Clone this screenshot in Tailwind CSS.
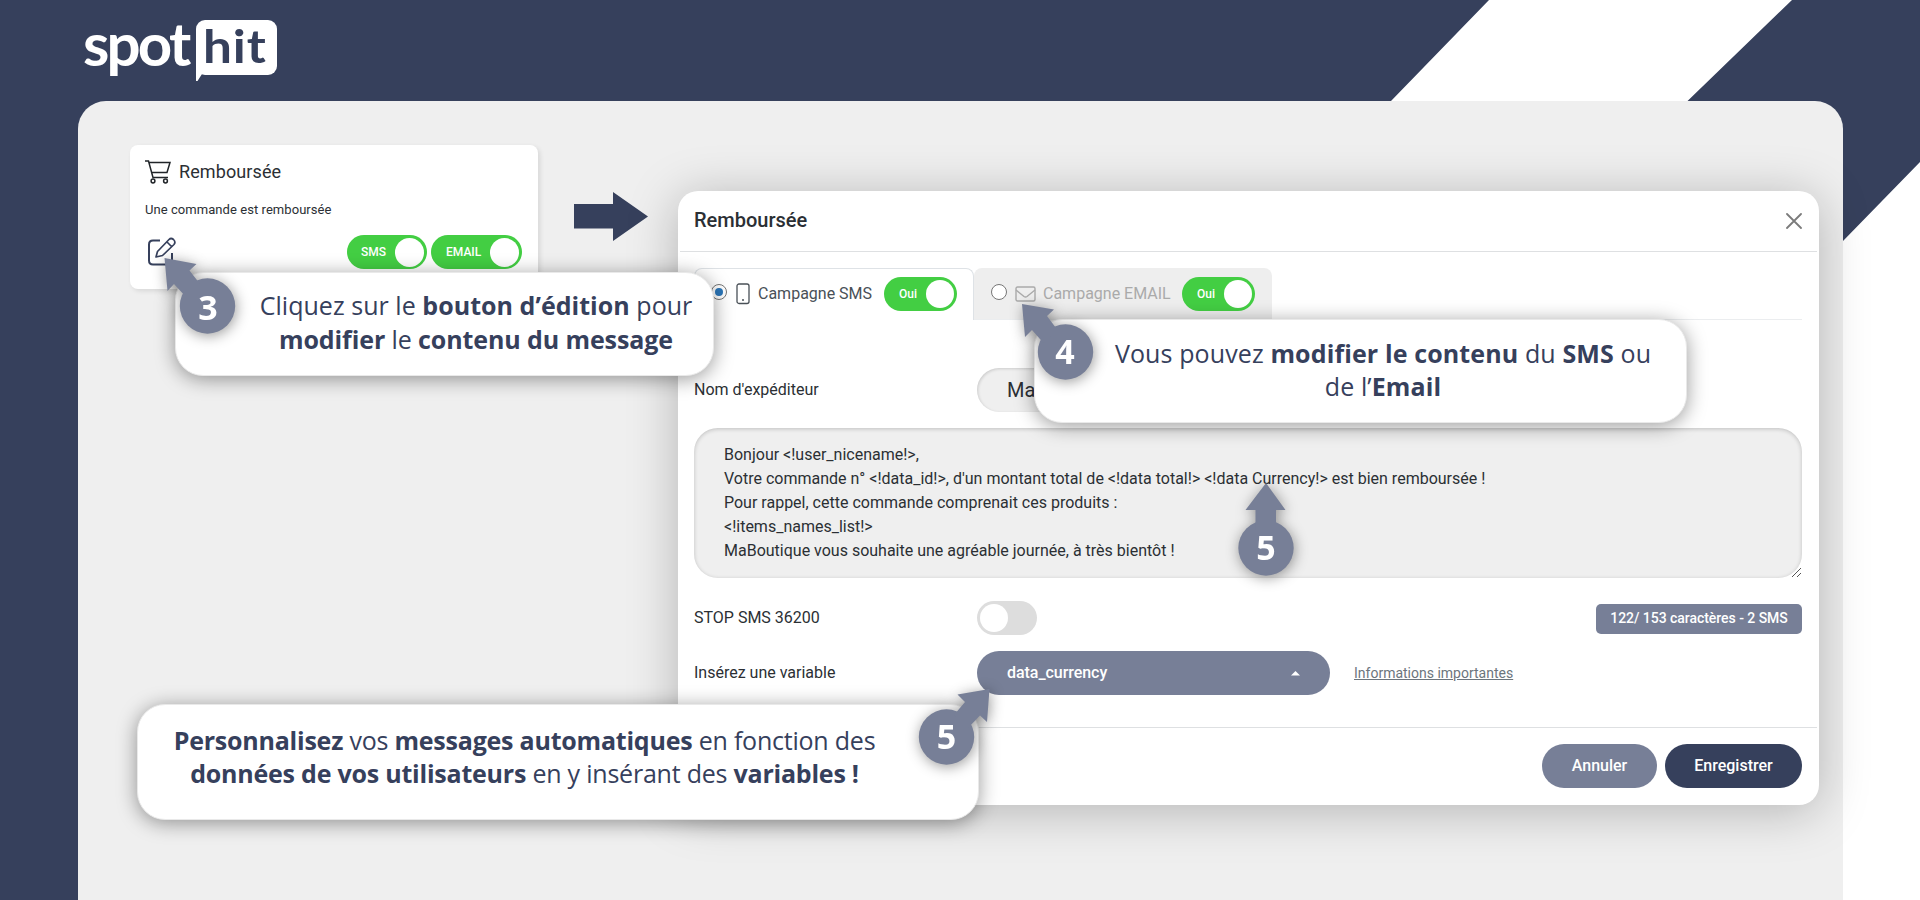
<!DOCTYPE html>
<html lang="fr"><head><meta charset="utf-8"><title>Spot-Hit</title>
<script src="https://cdn.jsdelivr.net/npm/@tailwindcss/browser@4"></script></head>
<body class="relative w-[1920px] h-[900px] overflow-hidden bg-white font-['Roboto',sans-serif] text-[#2b2f34]">
<svg class="absolute inset-0" width="1920" height="900" fill="#36405c"><path d="M0 0H1489L1391 101V200H100V900H0Z"/><path d="M1792 0H1920V162L1843 241L1780 300V101H1687.5Z"/></svg>
<header class="relative h-[101px] pl-[83px] pt-5 flex items-start text-white font-['Lato',sans-serif] font-bold">
  <span class="w-[113px] mt-[-5px] text-[60px] leading-[57px] tracking-[-2.8px]">spot</span>
  <span class="relative w-[81px] h-[55px] rounded-[9px] bg-white text-[#36405c] text-[45px] leading-[53px] pl-[7px]"><span class="inline-block origin-left scale-x-[1.14] tracking-[0.8px]">hit</span>
    <svg class="absolute left-0 top-[45px]" width="10" height="16" fill="#fff"><path d="M0 0H10V9H6L1.5 16H0Z"/></svg></span>
</header>
<main class="relative ml-[78px] w-[1765px] h-[799px] rounded-t-[28px] bg-[#efefef] flex items-start">
  <section class="ml-[52px] mt-[44px] w-[408px] h-[144px] rounded-lg bg-white shadow-[2px_2px_5px_rgba(0,0,0,.1)] pt-[14px] pl-[15px] pr-4 flex flex-col">
    <div class="flex items-center h-6 text-[18px] tracking-[0.1px]">
      <svg class="mr-2 mt-[2px]" width="26" height="24" fill="none" stroke="#212529" stroke-width="1.5"><path d="M0 1H3.5L8 17.5H23M4 2.5H25L22 12.5H6.5"/><circle cx="8" cy="21" r="1.9"/><circle cx="20.500" cy="21" r="1.9"/></svg>
      <span>Remboursée</span></div>
    <p class="mt-[17px] text-[13px] leading-5 tracking-[0.06px]">Une commande est remboursée</p>
    <div class="mt-[15px] flex items-center text-white text-[12px] font-medium">
      <svg class="ml-[3px] mr-auto" width="30" height="30" fill="none" stroke="#36405c" stroke-width="2" stroke-linejoin="round"><path d="M12 3.500H5Q1 3.500 1 7.500V23.500Q1 27.500 5 27.500H20Q24 27.500 24 23.500V16"/><path d="M8 20L9.500 14.500L21 2.500Q23 .5 25.500 2.500Q28 5 26 7.500L14.500 18.500ZM19 5L23.500 9.500" stroke-width="1.700"/></svg>
      <span class="w-[80px] h-[34px] rounded-full bg-[#43ce43] pl-[14px] pr-[3px] flex items-center justify-between">SMS<i class="size-[29px] rounded-full bg-white"></i></span>
      <span class="ml-1 w-[91px] h-[34px] rounded-full bg-[#43ce43] pl-[15px] pr-[3px] flex items-center justify-between">EMAIL<i class="size-[29px] rounded-full bg-white"></i></span>
    </div>
  </section>
  <svg class="ml-[36px] mt-[91px]" width="74" height="50" fill="#36405c"><path d="M0 12H39V0L74 24.500L39 49V36.500H0Z"/></svg>
  <section class="ml-[30px] mt-[90px] w-[1141px] h-[614px] shrink-0 rounded-[20px] bg-white shadow-[0_6px_50px_rgba(0,0,0,.25)] flex flex-col">
    <div class="mx-[2px] h-[61px] border-b border-[#dee0e2] flex items-center justify-between pl-[14px] pr-[15px] text-[20px] font-medium">
      <span class="-mt-[2px]">Remboursée</span>
      <svg class="-mt-[1px]" width="16" height="16" stroke="#7b7b7b" stroke-width="1.800" stroke-linecap="round"><path d="M1 1L15 15M15 1L1 15"/></svg></div>
    <div class="ml-4 mr-[17px] mt-4 h-[52px] flex border-b border-[#ebedef] text-[16px]">
      <div class="w-[280px] h-[52px] border border-b-0 border-[#dee2e6] rounded-t-lg bg-white flex items-center pl-4 pb-[1px] text-[#495057]">
        <i class="size-[16px] mt-[-4px] rounded-full border border-[#767676] bg-white flex items-center justify-center"><b class="size-[8px] rounded-full bg-[#2b76b9]"></b></i>
        <svg class="ml-[9px] mr-2" width="14" height="22" fill="none" stroke="#495057" stroke-width="1.300"><rect x="1" y="1" width="12" height="19.500" rx="2"/><path d="M6 17H8"/></svg>
        <span class="w-[126px]">Campagne SMS</span>
        <span class="w-[73px] h-[34px] rounded-full bg-[#43ce43] pl-[15px] pr-[3px] flex items-center justify-between text-white text-[12px] font-medium">Oui<i class="size-[28px] rounded-full bg-white"></i></span>
      </div>
      <div class="w-[298px] h-[51px] rounded-t-lg bg-[#eee] flex items-center pl-[17px] text-[#aaa]">
        <i class="size-[16px] mt-[-4px] rounded-full border border-[#767676] bg-white"></i>
        <svg class="ml-2 mr-[7px]" width="21" height="16" fill="none" stroke="#aaa" stroke-width="1.400"><rect x="1" y="1" width="19" height="14" rx="1.500"/><path d="M1 4L9 10.500Q10.500 11.500 12 10.500L20 4"/></svg>
        <span class="w-[139px]">Campagne EMAIL</span>
        <span class="w-[73px] h-[34px] rounded-full bg-[#43ce43] pl-[15px] pr-[3px] flex items-center justify-between text-white text-[12px] font-medium">Oui<i class="size-[28px] rounded-full bg-white"></i></span>
      </div>
    </div>
    <div class="ml-4 mr-[17px] mt-12 h-[44px] flex items-center text-[16px]">
      <span class="w-[283px]">Nom d'expéditeur</span>
      <span class="w-[353px] h-[44px] rounded-full bg-[#efefef] shadow-[inset_1px_1px_3px_rgba(0,0,0,.15)] pl-[30px] text-[20px] leading-[44px]">MaBoutique</span>
    </div>
    <div class="relative ml-4 mr-[17px] mt-4 h-[150px] rounded-[24px] bg-[#efefef] shadow-[inset_0_1px_4px_rgba(0,0,0,.2)] pt-[15px] pl-[30px] text-[16px] leading-6 whitespace-nowrap">
      <p>Bonjour &lt;!user_nicename!&gt;,</p>
      <p>Votre commande n° &lt;!data_id!&gt;, d'un montant total de &lt;!data total!&gt; &lt;!data Currency!&gt; est bien remboursée !</p>
      <p>Pour rappel, cette commande comprenait ces produits :</p>
      <p>&lt;!items_names_list!&gt;</p>
      <p>MaBoutique vous souhaite une agréable journée, à très bientôt !</p>
      <svg class="absolute right-[1px] bottom-[1px]" width="9" height="9" stroke="#555" stroke-width="1"><path d="M0 9L9 0M5 9L9 5"/></svg>
    </div>
    <div class="ml-4 mr-[17px] mt-[23px] h-[34px] flex items-center text-[16px]">
      <span class="w-[283px]">STOP SMS 36200</span>
      <span class="w-[60px] h-[34px] rounded-full bg-[#ddd] pl-[3px] flex items-center"><i class="size-[28px] rounded-full bg-white"></i></span>
      <span class="ml-auto mt-[2px] w-[206px] h-[30px] rounded-[5px] bg-[#777f97] text-white text-[14px] font-medium leading-[29px] text-center tracking-[-0.04px]">122/ 153 caractères - 2 SMS</span>
    </div>
    <div class="ml-4 mr-[17px] mt-4 h-[44px] flex items-center text-[16px]">
      <span class="w-[283px]">Insérez une variable</span>
      <span class="w-[353px] h-[44px] rounded-full bg-[#777f97] text-white font-medium flex items-center justify-between px-[30px] tracking-[-0.05px]">data_currency
        <svg width="9" height="5" fill="#fff"><path d="M0 4.500L4.500 0L9 4.500Z"/></svg></span>
      <a class="ml-6 text-[14px] text-[#6c757d] underline">Informations importantes</a>
    </div>
    <div class="mx-[2px] mt-8 border-t border-[#dee0e2] pt-4 pr-[15px] flex justify-end gap-2 text-white text-[16px] font-medium leading-[43px] text-center">
      <span class="w-[115px] h-[44px] rounded-full bg-[#777f97]">Annuler</span>
      <span class="w-[137px] h-[44px] rounded-full bg-[#36405c]">Enregistrer</span>
    </div>
  </section>
</main>
<!-- Step callouts -->
<div class="absolute left-[175px] top-[272px] w-[539px] h-[104px] rounded-[28px] bg-white border border-[#e9e9e9] shadow-[0_3px_20px_rgba(0,0,0,.4)] pl-[63px] pt-[16px] text-center whitespace-nowrap text-[25px] leading-[33.500px] text-[#36405c] font-['Open_Sans',sans-serif]">
  <p class="tracking-[0.04px]">Cliquez sur le <b>bouton d’édition</b> pour</p><p class="tracking-[-0.1px]"><b>modifier</b> le <b>contenu du message</b></p></div>
<div class="absolute left-[1034px] top-[319px] w-[653px] h-[104px] rounded-[28px] bg-white border border-[#e9e9e9] shadow-[0_3px_20px_rgba(0,0,0,.4)] pl-[45px] pt-[17px] text-center whitespace-nowrap text-[25px] leading-[33px] tracking-[0.12px] text-[#36405c] font-['Open_Sans',sans-serif]">
  <p>Vous pouvez <b>modifier le contenu</b> du <b>SMS</b> ou</p><p>de l’<b>Email</b></p></div>
<div class="absolute left-[137px] top-[704px] w-[842px] h-[116px] rounded-[28px] bg-white border border-[#e9e9e9] shadow-[0_3px_20px_rgba(0,0,0,.4)] pr-[67px] pt-[19px] text-center whitespace-nowrap text-[25px] leading-[33px] tracking-[-0.22px] text-[#36405c] font-['Open_Sans',sans-serif]">
  <p><b>Personnalisez</b> vos <b>messages automatiques</b> en fonction des</p><p><b>données de vos utilisateurs</b> en y insérant des <b>variables !</b></p></div>
<!-- Numbered pointers -->
<svg class="absolute inset-0 drop-shadow-[1px_2px_7px_rgba(0,0,0,.4)] font-['Open_Sans',sans-serif] font-bold text-[34px]" width="1920" height="900" text-anchor="middle">
  <g fill="#777f97"><circle cx="207.500" cy="306" r="27.700"/><path d="M164.500 258L196.500 264L189.500 270.500L200 284L186 297L174 284L167.500 291Z"/>
  <circle cx="1065.500" cy="352" r="27.700"/><path d="M1022 304L1054 309.500L1047 316L1057.500 330L1043.500 343L1032 330L1025 337Z"/>
  <circle cx="1266" cy="548" r="27.700"/><path d="M1266 483L1285.500 510H1276V530H1255.500V510H1245.500Z"/>
  <circle cx="946.500" cy="737" r="27.700"/><path d="M989.500 689L957.500 694.500L965 702L954 715L968 728L980 715.500L987 722Z"/></g>
  <g fill="#fff"><text x="208" y="320">3</text><text x="1065" y="364">4</text><text x="1266" y="560">5</text><text x="946.500" y="749">5</text></g>
</svg>
</body></html>
